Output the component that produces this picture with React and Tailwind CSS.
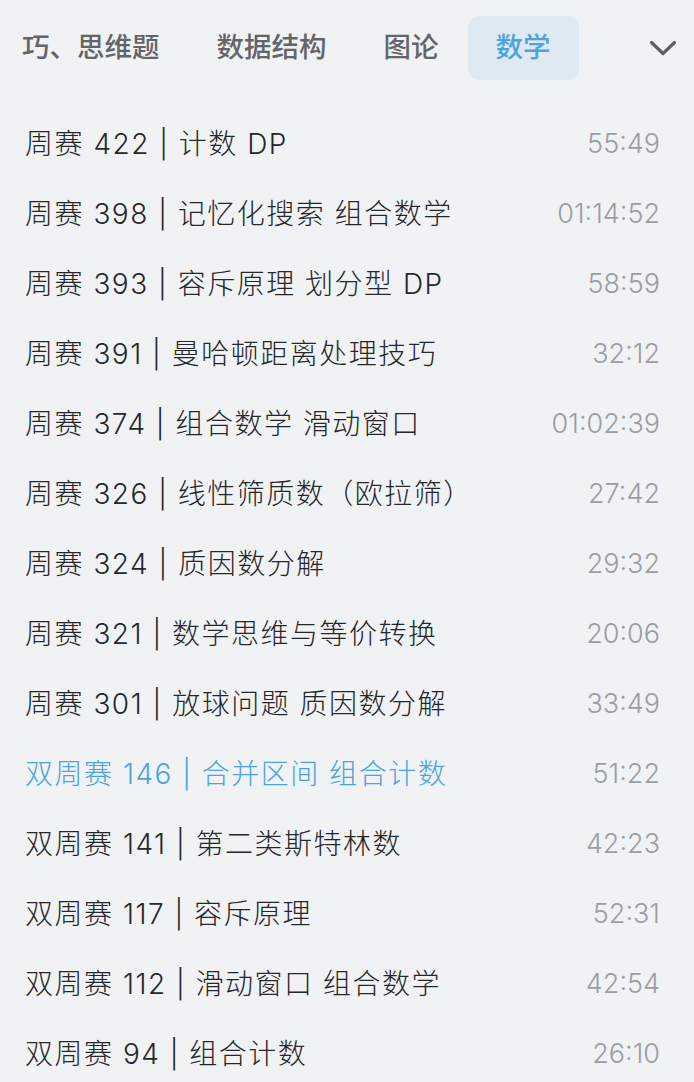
import React from "react";

const tabs = ["巧、思维题", "数据结构", "图论", "数学"];

const rows = [
  ["周赛 422 | 计数 DP", "55:49"],
  ["周赛 398 | 记忆化搜索 组合数学", "01:14:52"],
  ["周赛 393 | 容斥原理 划分型 DP", "58:59"],
  ["周赛 391 | 曼哈顿距离处理技巧", "32:12"],
  ["周赛 374 | 组合数学 滑动窗口", "01:02:39"],
  ["周赛 326 | 线性筛质数（欧拉筛）", "27:42"],
  ["周赛 324 | 质因数分解", "29:32"],
  ["周赛 321 | 数学思维与等价转换", "20:06"],
  ["周赛 301 | 放球问题 质因数分解", "33:49"],
  ["双周赛 146 | 合并区间 组合计数", "51:22", true],
  ["双周赛 141 | 第二类斯特林数", "42:23"],
  ["双周赛 117 | 容斥原理", "52:31"],
  ["双周赛 112 | 滑动窗口 组合数学", "42:54"],
  ["双周赛 94 | 组合计数", "26:10"],
];

export default function App() {
  return (
    <div
      className="w-[694px] h-[1082px] overflow-hidden bg-[#f1f2f4]"
      style={{ fontFamily: 'Inter, "Noto Sans CJK SC", sans-serif' }}
    >
      {/* Tabs */}
      <div className="flex items-center h-[96px] pl-[22px] pr-[17px]">
        <div className="flex items-center flex-1 gap-[1px] -ml-[28px]">
          {tabs.map((t, i) => (
            <div
              key={t}
              className={`h-[64px] shrink-0 whitespace-nowrap flex items-center px-[28px] rounded-[12px] text-[27.5px] font-medium ${
                i === 3 ? "bg-[#dfe9f1] text-[#4ba3df]" : "text-[#636569]"
              }`}
            >
              {t}
            </div>
          ))}
        </div>
        <svg width="28" height="16" viewBox="0 0 28 16" fill="none" stroke="#5d5f63" strokeWidth="3.2" strokeLinecap="round" strokeLinejoin="round">
          <path d="M2.5 2.5l11.5 11 11.5-11" />
        </svg>
      </div>

      {/* List */}
      <div className="mt-[13px] flex flex-col">
        {rows.map(([title, time, active]) => (
          <div key={title} className="h-[70px] flex items-center justify-between pl-[25px] pr-[34px]">
            <span
              className={`text-[28px] font-light tracking-[1.5px] whitespace-nowrap ${
                active ? "text-[#4ba3df]" : "text-[#26272a]"
              }`}
            >
              {title}
            </span>
            <span className="text-[27px] font-light text-[#9b9da2]">{time}</span>
          </div>
        ))}
      </div>
    </div>
  );
}
